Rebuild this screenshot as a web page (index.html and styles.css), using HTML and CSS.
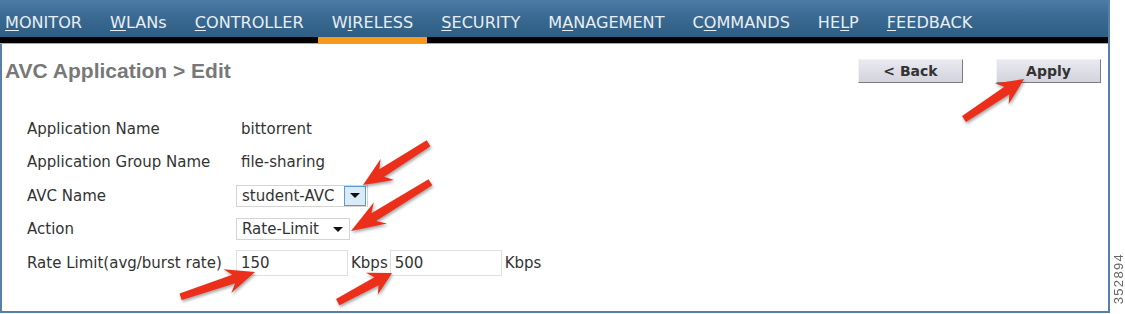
FILE: index.html
```html
<!DOCTYPE html>
<html lang="en">
  <head>
    <meta charset="UTF-8" />
    <meta name="viewport" content="width=device-width, initial-scale=1.0" />
    <title>AVC Application &gt; Edit</title>
    <link rel="stylesheet" href="styles.css">
  </head>

  <body>
    <div class="page">
      <div class="frame">
        <ul class="menu">
          <li><u>M</u>ONITOR</li>
          <li><u>W</u>LANs</li>
          <li><u>C</u>ONTROLLER</li>
          <li class="active">W<u>I</u>RELESS</li>
          <li><u>S</u>ECURITY</li>
          <li>M<u>A</u>NAGEMENT</li>
          <li>C<u>O</u>MMANDS</li>
          <li>HE<u>L</u>P</li>
          <li><u>F</u>EEDBACK</li>
        </ul>

        <div class="head">
          <h1>AVC Application &gt; Edit</h1>
          <div class="actions">
            <button class="btn">&lt; Back</button>
            <button class="btn">Apply</button>
          </div>
        </div>

        <div class="form">
          <div class="label">Application Name</div>
          <div class="value">bittorrent</div>

          <div class="label">Application Group Name</div>
          <div class="value">file-sharing</div>

          <div class="label">AVC Name</div>
          <div class="field">
            <div class="select select-avc">
              <span class="select-text">student-AVC</span>
              <span class="caret caret-focus">
                <svg width="10" height="5" viewBox="0 0 10 5"><path d="M0 0h10L5 5z" fill="#111"/></svg>
              </span>
            </div>
          </div>

          <div class="label">Action</div>
          <div class="field">
            <div class="select select-action">
              <span class="select-text">Rate-Limit</span>
              <span class="caret">
                <svg width="10" height="5" viewBox="0 0 10 5"><path d="M0 0h10L5 5z" fill="#111"/></svg>
              </span>
            </div>
          </div>

          <div class="label">Rate Limit(avg/burst rate)</div>
          <div class="field">
            <input class="rate" type="text" value="150">
            <span class="unit">Kbps</span>
            <input class="rate" type="text" value="500">
            <span class="unit">Kbps</span>
          </div>
        </div>

        <!-- callout arrows drawn over the form -->
        <svg class="arrows" width="1110" height="312" viewBox="0 0 1110 312">
          <defs>
            <path id="arrow" d="M0 0 L-26 -12.5 L-20 -4.5 L-70 -3.5 L-70 3.5 L-20 4.5 L-26 12.5 Z" fill="#ec2f1b"/>
          </defs>
          <use href="#arrow" transform="translate(1024 79) rotate(-33.7) scale(1.03 1)"/>
          <use href="#arrow" transform="translate(363 185) rotate(147.5) scale(1.11 1)"/>
          <use href="#arrow" transform="translate(351 231) rotate(148.5) scale(1.33 1)"/>
          <use href="#arrow" transform="translate(255 272) rotate(-18.4) scale(1.12 1)"/>
          <use href="#arrow" transform="translate(392 273) rotate(-28.2) scale(0.88 1)"/>
        </svg>
      </div>

      <div class="side">
        <span class="code">352894</span>
      </div>
    </div>
  </body>
</html>
```

FILE: styles.css
```css
    body {
      margin: 0;
      background: #fff;
      font-family: "DejaVu Sans", Verdana, sans-serif;
      color: #333;
    }
    .page {
      display: flex;
      width: 1125px;
      height: 314px;
    }
    .frame {
      position: relative;
      width: 1106px;
      height: 311px;
      border: 2px solid #5680a8;
      border-top: 0;
    }

    /* top menu */
    .menu {
      display: flex;
      margin: 0;
      padding: 0;
      list-style: none;
      height: 37px;
      margin-left: -2px;
      background: linear-gradient(#4c7ca6, #3a6a92 45%, #2f5e84);
      border-bottom: 6px solid #000;
      box-shadow: 0 1px 0 #a8a8a8;
    }
    .menu li {
      height: 28px;
      padding: 9px 14px 0;
      line-height: 28px;
      font-size: 16.1px;
      color: #e8eef3;
      white-space: nowrap;
    }
    .menu li:first-child {
      padding-left: 5px;
    }
    .menu li.active {
      border-bottom: 6px solid #f7981d;
    }
    .menu u {
      text-underline-offset: 2px;
    }

    /* title row */
    .head {
      display: flex;
      align-items: center;
      justify-content: space-between;
      height: 54px;
      margin-top: 1px;
      padding: 0 7px 0 3px;
    }
    .head h1 {
      margin: 0;
      font-family: "Liberation Sans", Arial, sans-serif;
      font-size: 21px;
      font-weight: bold;
      color: #787878;
    }
    .actions {
      display: flex;
      gap: 33px;
    }
    .btn {
      width: 105px;
      height: 24px;
      padding: 0;
      font-family: "DejaVu Sans", Verdana, sans-serif;
      font-size: 14px;
      font-weight: bold;
      color: #333;
      background: linear-gradient(#e9e9f0, #d3d3de);
      border: 1px solid;
      border-color: #f2f2f2 #7d7d7d #7d7d7d #f2f2f2;
    }

    /* form grid */
    .form {
      display: grid;
      grid-template-columns: 209px auto;
      grid-auto-rows: 33.5px;
      align-items: center;
      margin-top: 14px;
      padding-left: 25px;
      font-size: 15px;
    }
    .value {
      padding-left: 5px;
    }
    .field {
      display: flex;
      align-items: center;
    }
    .select {
      display: flex;
      align-items: center;
      justify-content: space-between;
      height: 20px;
      padding: 0 1px 0 5px;
      border: 1px solid #d4d4d4;
      background: #fff;
    }
    .select-avc {
      width: 124px;
    }
    .select-action {
      width: 106px;
    }
    .caret {
      display: flex;
      align-items: center;
      justify-content: center;
      width: 20px;
      height: 18px;
    }
    .caret-focus {
      border: 1px solid #5a9ad6;
      background: #d9ebf9;
    }
    .rate {
      width: 102px;
      height: 24px;
      padding: 0 4px;
      margin: 0;
      border: 1px solid #e0e0e0;
      font-family: "DejaVu Sans", Verdana, sans-serif;
      font-size: 15px;
      color: #333;
    }
    .unit {
      padding: 0 2px 0 3px;
    }

    .arrows {
      position: absolute;
      left: -2px;
      top: 0;
      pointer-events: none;
      filter: drop-shadow(1px 2px 1.5px rgba(0, 0, 0, 0.35));
    }

    .side {
      display: flex;
      align-items: flex-end;
      width: 15px;
      padding-bottom: 10px;
    }
    .code {
      writing-mode: vertical-rl;
      transform: rotate(180deg);
      margin-left: 1px;
      font-family: "Liberation Sans", Arial, sans-serif;
      font-size: 13px;
      letter-spacing: 1.3px;
      color: #666;
    }
```
